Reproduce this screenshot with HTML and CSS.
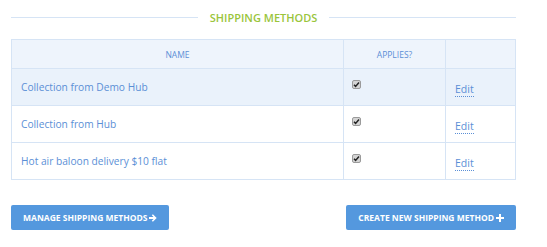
FILE: index.html
```html
<!DOCTYPE html>
<html lang="en">
<head>
    <meta charset="UTF-8">
    <title>Shipping Methods</title>
    <link rel="stylesheet" href="styles.css">
</head>
<body>
    <div class="panel">
        <!-- Title with rules -->
        <h2 class="section-title"><span>Shipping Methods</span></h2>

        <table class="methods">
            <thead>
                <tr>
                    <th class="col-name">Name</th>
                    <th class="col-applies">Applies?</th>
                    <th class="col-edit"></th>
                </tr>
            </thead>
            <tbody>
                <tr class="active">
                    <td>Collection from Demo Hub</td>
                    <td class="check"><span class="tick"><svg width="9" height="9" viewBox="0 0 9 9"><rect x="0.5" y="0.5" width="8" height="8" rx="1.5" fill="#d4d4d4" stroke="#9a9a9a"/><path d="M2 4.8l1.6 1.6L7 2.6" fill="none" stroke="#222" stroke-width="1.5"/></svg></span></td>
                    <td class="edit"><a href="#">Edit</a></td>
                </tr>
                <tr>
                    <td>Collection from Hub</td>
                    <td class="check"><span class="tick"><svg width="9" height="9" viewBox="0 0 9 9"><rect x="0.5" y="0.5" width="8" height="8" rx="1.5" fill="#d4d4d4" stroke="#9a9a9a"/><path d="M2 4.8l1.6 1.6L7 2.6" fill="none" stroke="#222" stroke-width="1.5"/></svg></span></td>
                    <td class="edit"><a href="#">Edit</a></td>
                </tr>
                <tr>
                    <td>Hot air baloon delivery $10 flat</td>
                    <td class="check"><span class="tick"><svg width="9" height="9" viewBox="0 0 9 9"><rect x="0.5" y="0.5" width="8" height="8" rx="1.5" fill="#d4d4d4" stroke="#9a9a9a"/><path d="M2 4.8l1.6 1.6L7 2.6" fill="none" stroke="#222" stroke-width="1.5"/></svg></span></td>
                    <td class="edit"><a href="#">Edit</a></td>
                </tr>
            </tbody>
        </table>

        <div class="actions">
            <a class="btn" href="#">Manage Shipping Methods
                <svg width="8" height="8" viewBox="0 0 8 8"><path d="M0 3h4.5L2.8 1.3 3.9 0.2 7.7 4 3.9 7.8 2.8 6.7 4.5 5H0z" fill="#fff"/></svg>
            </a>
            <a class="btn" href="#">Create New Shipping Method
                <svg width="8" height="8" viewBox="0 0 8 8"><path d="M3 0h2v3h3v2H5v3H3V5H0V3h3z" fill="#fff"/></svg>
            </a>
        </div>
    </div>
</body>
</html>
```

FILE: styles.css
```css
* {
    margin: 0;
    padding: 0;
    box-sizing: border-box;
}
body {
    background: #fff;
    font-family: "Open Sans", Arial, sans-serif;
    color: #5b8fd6;
}
.panel {
    width: 505px;
    margin-left: 11px;
    padding-top: 9px;
}
.section-title {
    display: flex;
    align-items: center;
    gap: 12px;
    font-size: 11px;
    font-weight: 600;
    text-transform: uppercase;
    color: #9ac53c;
    height: 16px;
}
.section-title::before,
.section-title::after {
    content: "";
    flex: 1;
    border-top: 1px solid #d6e4f5;
}
.methods {
    width: 100%;
    margin-top: 14px;
    border-collapse: collapse;
    border: 1px solid #d6e4f5;
}
.methods th,
.methods td {
    border: 1px solid #d6e4f5;
}
.methods th {
    background: #eef4fc;
    height: 29px;
    font-size: 8.5px;
    font-weight: 400;
    text-transform: uppercase;
    color: #5b8fd6;
}
.col-name { width: 332px; }
.col-applies { width: 102px; }
.methods td {
    height: 37px;
    font-size: 10.2px;
    padding-left: 9px;
    color: #5b8fd6;
}
.methods tr.active td {
    background: #eaf2fb;
}
.methods td.check {
    padding-left: 8px;
    padding-bottom: 6px;
}
.tick {
    display: block;
    width: 9px;
    height: 9px;
}
.tick svg {
    display: block;
}
.methods td.edit {
    padding-left: 9px;
    padding-top: 3px;
    font-size: 10.5px;
}
.edit a {
    color: #5b8fd6;
    text-decoration: none;
    border-bottom: 1px dotted #5b8fd6;
}
.actions {
    display: flex;
    justify-content: space-between;
    margin-top: 25px;
}
.btn {
    display: flex;
    align-items: center;
    gap: 2px;
    height: 25px;
    padding: 0 12px;
    background: #5498de;
    border-radius: 2px;
    color: #fff;
    font-size: 8.5px;
    font-weight: 700;
    text-transform: uppercase;
    text-decoration: none;
}
```
